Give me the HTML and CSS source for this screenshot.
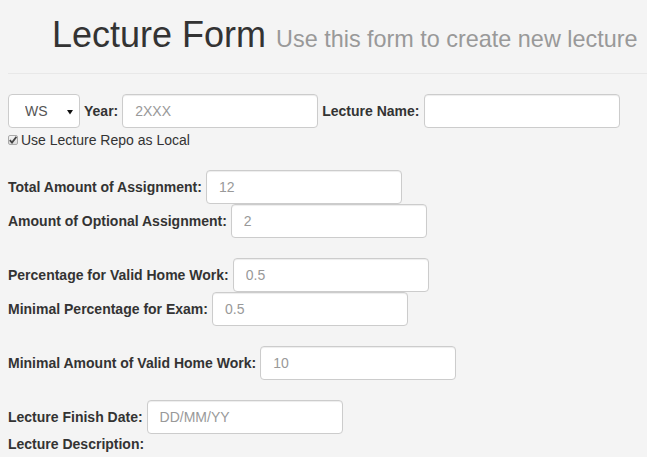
FILE: index.html
```html
<!DOCTYPE html>
<html lang="en">
<head>
<meta charset="utf-8">
<title>Lecture Form</title>
<link rel="stylesheet" href="styles.css">
</head>
<body>
<div class="page-header">
  <h1>Lecture Form <small>Use this form to create new lecture</small></h1>
</div>
<form class="lecture-form">
  <div class="group">
    <div class="row">
      <span class="select-wrap">
        <select class="select"><option>WS</option><option>SS</option></select>
        <svg class="caret" width="6" height="5" viewBox="0 0 6 5"><path d="M0 0H6L3 4.5Z" fill="#111"/></svg>
      </span>
      <label class="label">Year:</label>
      <input class="field" type="text" placeholder="2XXX">
      <label class="label">Lecture Name:</label>
      <input class="field" type="text">
    </div>
    <label class="check-row">
      <span class="check-box"><svg width="8" height="8" viewBox="0 0 8 8"><path d="M0.8 4.2 L3 6.6 L7.4 0.8" fill="none" stroke="#444" stroke-width="1.8"/></svg></span>
      Use Lecture Repo as Local
    </label>
  </div>
  <div class="group">
    <div class="row"><label class="label">Total Amount of Assignment:</label><input class="field" type="text" placeholder="12"></div>
    <div class="row"><label class="label">Amount of Optional Assignment:</label><input class="field" type="text" placeholder="2"></div>
  </div>
  <div class="group">
    <div class="row"><label class="label">Percentage for Valid Home Work:</label><input class="field" type="text" placeholder="0.5"></div>
    <div class="row"><label class="label">Minimal Percentage for Exam:</label><input class="field" type="text" placeholder="0.5"></div>
  </div>
  <div class="group">
    <div class="row"><label class="label">Minimal Amount of Valid Home Work:</label><input class="field" type="text" placeholder="10"></div>
  </div>
  <div class="group last">
    <div class="row"><label class="label">Lecture Finish Date:</label><input class="field" type="text" placeholder="DD/MM/YY"></div>
    <label class="label block">Lecture Description:</label>
  </div>
</form>
</body>
</html>
```

FILE: styles.css
```css
html, body {
  margin: 0;
  padding: 0;
  background: #f4f4f4;
}
body {
  padding-left: 8px;
  font-family: "Liberation Sans", Arial, sans-serif;
  font-size: 14px;
  line-height: 20px;
  color: #333;
  overflow: hidden;
}
.page-header {
  margin: 15px 0 20px 0;
  padding: 0 0 18px 44px;
  border-bottom: 1px solid #e8e8e8;
}
.page-header h1 {
  margin: 0;
  font-size: 36px;
  line-height: 40px;
  height: 40px;
  font-weight: 400;
  color: #333;
  white-space: nowrap;
}
.page-header small {
  font-size: 23.4px;
  line-height: 1;
  color: #999;
}
.lecture-form {
  margin: 0;
}
.group {
  margin-bottom: 20px;
}
.group.last {
  margin-bottom: 0;
}
.row {
  display: flex;
  align-items: center;
  gap: 4px;
  height: 34px;
}
.label {
  font-weight: 700;
  white-space: nowrap;
}
.label.block {
  display: block;
}
.field {
  box-sizing: border-box;
  width: 196px;
  height: 34px;
  margin: 0;
  padding: 6px 12px;
  border: 1px solid #ccc;
  border-radius: 4px;
  background: #fff;
  font-family: "Liberation Sans", Arial, sans-serif;
  font-size: 14px;
  color: #555;
  box-shadow: inset 0 1px 1px rgba(0,0,0,0.075);
}
.field::placeholder {
  color: #999;
}
.select-wrap {
  position: relative;
  display: block;
  width: 72px;
  height: 34px;
}
.select {
  appearance: none;
  -webkit-appearance: none;
  box-sizing: border-box;
  width: 72px;
  height: 34px;
  margin: 0;
  padding: 6px 0 6px 16px;
  border: 1px solid #ccc;
  border-radius: 4px;
  background: #fff;
  font-family: "Liberation Sans", Arial, sans-serif;
  font-size: 14px;
  color: #555;
}
.caret {
  position: absolute;
  left: 59px;
  top: 16px;
}
.check-row {
  display: flex;
  align-items: center;
  gap: 3px;
  margin-top: 2px;
  height: 20px;
  font-weight: 400;
}
.check-box {
  box-sizing: border-box;
  width: 10px;
  height: 10px;
  border: 1px solid #a9a9a9;
  border-radius: 2px;
  background: linear-gradient(#f4f4f4, #dcdcdc);
  display: flex;
  align-items: center;
  justify-content: center;
}
.check-box svg {
  display: block;
}
```
